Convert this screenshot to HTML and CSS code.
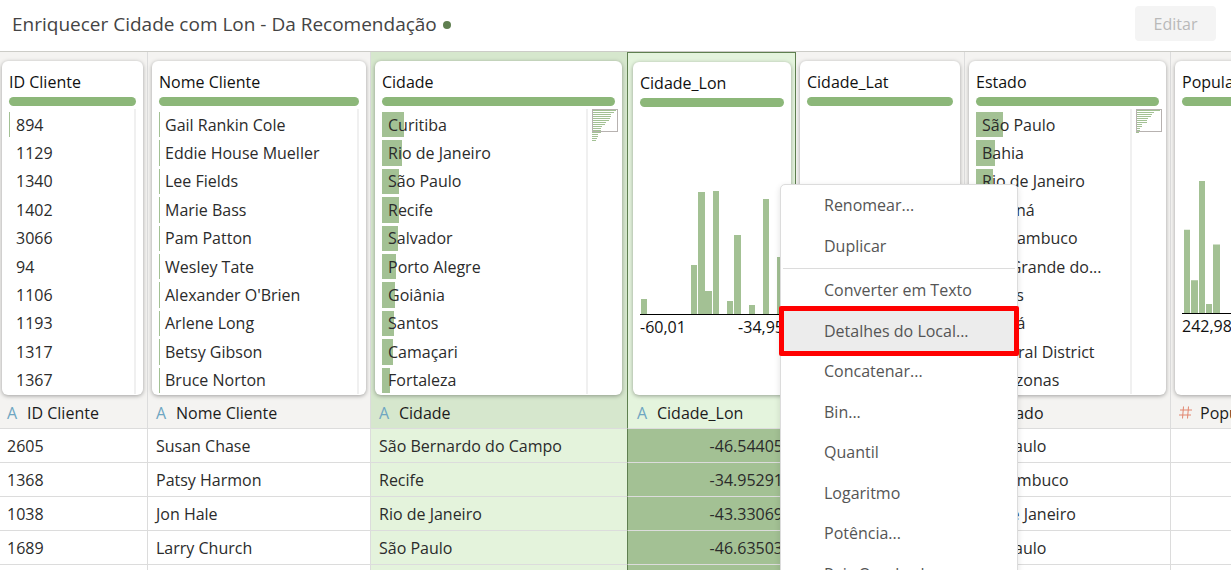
FILE: index.html
```html
<!DOCTYPE html>
<html lang="pt-BR">
<head>
<meta charset="utf-8">
<title>Enriquecer Cidade com Lon</title>
<link rel="stylesheet" href="styles.css">
</head>
<body>
<header class="topbar">
  <h1 class="title">Enriquecer Cidade com Lon - Da Recomendação</h1>
  <span class="status-dot"></span>
  <button class="edit" type="button" disabled>Editar</button>
</header>
<main class="sheet">
  <table class="grid">
    <colgroup>
      <col class="w-id"><col class="w-name"><col class="w-city"><col class="w-coord"><col class="w-coord"><col class="w-state"><col>
    </colgroup>
    <thead>
      <tr class="profiles">
        <td class="first">
          <section class="card">
            <h2>ID Cliente</h2><div class="quality"></div>
            <div class="body">
              <ul class="values">
                <li><i style="width:1px"></i>894</li><li>1129</li><li>1340</li><li>1402</li><li>3066</li><li>94</li><li>1106</li><li>1193</li><li>1317</li><li>1367</li>
              </ul>
            </div>
          </section>
        </td>
        <td>
          <section class="card">
            <h2>Nome Cliente</h2><div class="quality"></div>
            <div class="body">
              <ul class="values">
                <li><i style="width:1px"></i>Gail Rankin Cole</li><li><i style="width:1px"></i>Eddie House Mueller</li><li><i style="width:1px"></i>Lee Fields</li><li><i style="width:1px"></i>Marie Bass</li><li><i style="width:1px"></i>Pam Patton</li><li><i style="width:1px"></i>Wesley Tate</li><li><i style="width:1px"></i>Alexander O'Brien</li><li><i style="width:1px"></i>Arlene Long</li><li><i style="width:1px"></i>Betsy Gibson</li><li><i style="width:1px"></i>Bruce Norton</li>
              </ul>
            </div>
          </section>
        </td>
        <td class="city">
          <section class="card">
            <h2>Cidade</h2><div class="quality"></div>
            <div class="body">
              <ul class="values">
                <li><i style="width:22px"></i>Curitiba</li><li><i style="width:20px"></i>Rio de Janeiro</li><li><i style="width:17px"></i>São Paulo</li><li><i style="width:17px"></i>Recife</li><li><i style="width:16px"></i>Salvador</li><li><i style="width:14px"></i>Porto Alegre</li><li><i style="width:13px"></i>Goiânia</li><li><i style="width:12px"></i>Santos</li><li><i style="width:11px"></i>Camaçari</li><li><i style="width:8px"></i>Fortaleza</li>
              </ul>
              <svg class="minimap" width="26" height="33" viewBox="0 0 26 33" aria-hidden="true">
                <path class="lines" d="M0 1.5h24M0 3.5h22M0 5.5h19M0 7.5h19M0 9.5h18M0 11.5h17M0 13.5h14M0 15.5h13M0 17.5h10M0 19.5h9M0 21.5h9M0 23.5h9M0 25.5h6M0 27.5h6M0 29.5h5M0 31.5h4"/>
                <rect class="view" x=".5" y=".5" width="25" height="22"/>
              </svg>
            </div>
          </section>
        </td>
        <td class="lon">
          <section class="card">
            <h2>Cidade_Lon</h2><div class="quality"></div>
            <div class="body hist">
              <svg class="bars" viewBox="0 0 144 124" preserveAspectRatio="none" aria-hidden="true">
                <path d="M1 109h6v15h-6zM51 75h6v49h-6zM58 2h7v122h-7zM65 101h7v23h-7zM73 1h6v123h-6zM87 111h6v13h-6zM94 45h7v79h-7zM109 115h6v9h-6zM123 9h6v115h-6zM137 67h6v57h-6z"/>
              </svg>
              <div class="range"><span>-60,01</span><span>-34,95</span></div>
            </div>
          </section>
        </td>
        <td>
          <section class="card">
            <h2>Cidade_Lat</h2><div class="quality"></div>
            <div class="body"></div>
          </section>
        </td>
        <td>
          <section class="card">
            <h2>Estado</h2><div class="quality"></div>
            <div class="body">
              <ul class="values">
                <li><i style="width:27px"></i>São Paulo</li><li><i style="width:19px"></i>Bahia</li><li><i style="width:17px"></i>Rio de Janeiro</li><li><i style="width:15px"></i>Paraná</li><li><i style="width:13px"></i>Pernambuco</li><li><i style="width:11px"></i>Rio Grande do...</li><li><i style="width:11px"></i>Goiás</li><li><i style="width:7px"></i>Ceará</li><li><i style="width:6px"></i>Federal District</li><li><i style="width:5px"></i>Amazonas</li>
              </ul>
              <svg class="minimap" width="26" height="33" viewBox="0 0 26 33" aria-hidden="true">
                <path class="lines" d="M0 1.5h24M0 3.5h18M0 5.5h16M0 7.5h15M0 9.5h12M0 11.5h11M0 13.5h11M0 15.5h6M0 17.5h6M0 19.5h4M0 21.5h4M0 23.5h3"/>
                <rect class="view" x=".5" y=".5" width="25" height="22"/>
              </svg>
            </div>
          </section>
        </td>
        <td>
          <section class="card">
            <h2>População</h2><div class="quality"></div>
            <div class="body hist">
              <svg class="bars tall" viewBox="0 0 144 134" preserveAspectRatio="none" aria-hidden="true">
                <path d="M2 50h6v84h-6zM9 101h7v33h-7zM17 1h6v133h-6zM24 125h6v9h-6zM31 65h7v69h-7z"/>
              </svg>
              <div class="range"><span>242,98</span></div>
            </div>
          </section>
        </td>
      </tr>
      <tr class="names">
        <th class="first"><span class="type">A</span>ID Cliente</th>
        <th><span class="type">A</span>Nome Cliente</th>
        <th class="city"><span class="type">A</span>Cidade</th>
        <th class="lon"><span class="type">A</span>Cidade_Lon</th>
        <th><span class="type">A</span>Cidade_Lat</th>
        <th><span class="type">A</span>Estado</th>
        <th><span class="type number">
          <svg width="13" height="13" viewBox="0 0 13 13" aria-hidden="true"><path d="M4.5 .5l-1 12M9.5 .5l-1 12M1 4h12M0 9h12"/></svg>
        </span>População</th>
      </tr>
    </thead>
    <tbody>
      <tr><td class="first">2605</td><td>Susan Chase</td><td class="city">São Bernardo do Campo</td><td class="lon">-46.54405</td><td class="num">-23.71126</td><td>São Paulo</td><td></td></tr>
      <tr><td class="first">1368</td><td>Patsy Harmon</td><td class="city">Recife</td><td class="lon">-34.95291</td><td class="num">-8.02724</td><td>Pernambuco</td><td></td></tr>
      <tr><td class="first">1038</td><td>Jon Hale</td><td class="city">Rio de Janeiro</td><td class="lon">-43.33069</td><td class="num">-22.92049</td><td>Rio de Janeiro</td><td></td></tr>
      <tr><td class="first">1689</td><td>Larry Church</td><td class="city">São Paulo</td><td class="lon">-46.63503</td><td class="num">-23.53377</td><td>São Paulo</td><td></td></tr>
      <tr><td class="first"></td><td></td><td class="city"></td><td class="lon"></td><td></td><td></td><td></td></tr>
    </tbody>
  </table>
</main>
<div class="menu" role="menu">
  <div class="group short">
    <button type="button" role="menuitem">Renomear...</button>
    <button type="button" role="menuitem">Duplicar</button>
  </div>
  <div class="group">
    <button type="button" role="menuitem">Converter em Texto</button>
    <button type="button" role="menuitem" class="active">Detalhes do Local...</button>
    <button type="button" role="menuitem">Concatenar...</button>
    <button type="button" role="menuitem">Bin...</button>
    <button type="button" role="menuitem">Quantil</button>
    <button type="button" role="menuitem">Logaritmo</button>
    <button type="button" role="menuitem">Potência...</button>
    <button type="button" role="menuitem">Raiz Quadrada</button>
  </div>
</div>
</body>
</html>
```
FILE: styles.css
```css
* { box-sizing: border-box; }

body {
  margin: 0;
  height: 100vh;
  overflow: hidden;
  display: flex;
  flex-direction: column;
  background: #fff;
  color: #2b2b2b;
  font-family: "Open Sans", "Noto Sans", sans-serif;
  font-size: 16px;
  font-weight: 400;
}

.topbar {
  flex: none;
  display: flex;
  align-items: center;
  height: 52px;
  padding: 0 15px 4px 12px;
  border-bottom: 1px solid #ccccc7;
}
.title { margin: 0; font-size: 19px; font-weight: 400; color: #444; white-space: nowrap; }
.status-dot { width: 8px; height: 8px; margin: 2px 0 0 6px; border-radius: 50%; background: #5f7f50; }
.edit {
  margin-left: auto;
  width: 81px;
  height: 35px;
  border: 0;
  border-radius: 4px;
  background: #f4f4f4;
  color: #b9b9b9;
  font: inherit;
}

.sheet { flex: 1; min-height: 0; overflow: hidden; }
.grid {
  width: 100%;
  min-width: 1340px;
  table-layout: fixed;
  border-collapse: separate;
  border-spacing: 0;
}
.w-id { width: 148px; }
.w-name { width: 223px; }
.w-city { width: 256px; }
.w-coord { width: 169px; }
.w-state { width: 206px; }

.grid td, .grid th {
  height: 34px;
  padding: 0 8px;
  border-right: 1px solid #dcdcdc;
  border-bottom: 1px solid #dcdcdc;
  text-align: left;
  font-weight: 400;
  white-space: nowrap;
}
.grid .first { padding-left: 7px; }
.grid .city { border-right: 0; background: #e4f3dc; }
.grid .lon {
  padding-right: 12px;
  border-left: 1px solid #5f7f50;
  background: #a3c194;
  text-align: right;
}
.grid .num { text-align: right; }

.grid .profiles td {
  padding: 9px 4px 0 4px;
  border-bottom: 0;
  background: #f4f3f1;
  vertical-align: top;
  text-align: left;
}
.grid .profiles .first { padding-left: 2px; }
.grid .names th { padding-top: 2px; background: #f4f3f1; color: #1c1c1c; }
.grid .profiles .city, .grid .names .city { background: #d6e7cd; }
.grid .profiles .city { padding-right: 5px; }
.grid .profiles .lon, .grid .names .lon { background: #e4f4dd; text-align: left; }
.grid .profiles .lon { padding-left: 5px; border-top: 1px solid #5f7f50; border-right: 1px solid #5f7f50; }
.grid .names .lon { padding-left: 9px; }

.card {
  position: relative;
  height: 334px;
  padding: 9px 7px 0;
  border-radius: 6px;
  background: #fff;
  box-shadow: 0 1px 4px rgba(0, 0, 0, .35);
}
.card h2 { margin: 0 0 3px; font-size: 16px; line-height: 24px; font-weight: 400; color: #111; }
.lon .card { height: 333px; }
.quality { height: 9px; border-radius: 5px; background: #8cb779; }
.body { display: flex; height: 288px; padding-top: 3px; }
.values {
  flex: 1;
  display: grid;
  grid-template-rows: repeat(10, 1fr);
  row-gap: 3px;
  margin: 0;
  padding: 3px 0 1px;
  border-right: 2px solid #f0f0f0;
  list-style: none;
}
.values li { position: relative; z-index: 0; display: flex; align-items: center; padding-left: 6px; min-height: 0; line-height: 24px; }
.first .values li { padding-left: 7px; }
.values i { position: absolute; z-index: -1; inset: 0 auto 0 0; background: #a3c194; }
.minimap { flex: none; margin: 0 -3px 0 4px; shape-rendering: crispEdges; }
.lines { fill: none; stroke: #a3c194; }
.view { fill: none; stroke: #b7b2b0; }

.hist { flex-direction: column; padding-top: 83px; }
.bars { flex: none; width: 144px; height: 125px; border-bottom: 1px solid #000; fill: #a3c194; }
.hist .tall { height: 134px; margin-top: -9px; }
.range { display: flex; justify-content: space-between; color: #111; font-size: 16px; line-height: 24px; }

.type { display: inline-block; width: 20px; color: #6fa6c2; font-size: 16px; }
.number { width: 21px; }
.number svg { display: block; fill: none; stroke: #e2866f; }

.menu {
  position: absolute;
  top: 184px;
  left: 780px;
  width: 238px;
  border: 1px solid #dcdcdc;
  border-radius: 5px;
  background: #fff;
  box-shadow: 0 2px 6px rgba(0, 0, 0, .12);
}
.group { display: grid; grid-auto-rows: 1fr; height: 325px; padding-top: 1px; }
.short { height: 84px; padding: 0 0 2px; margin: 0 2px; border-bottom: 1px solid #dcdcdc; }
.menu button {
  position: relative;
  padding: 0 0 0 43px;
  border: 0;
  background: none;
  color: #555;
  font: inherit;
  text-align: left;
}
.short button { padding-left: 41px; }
.menu .active { background: #ececec; }
.active::after { content: ""; position: absolute; inset: -5px -2px; border: 5px solid #f00; border-radius: 2px; }
```
